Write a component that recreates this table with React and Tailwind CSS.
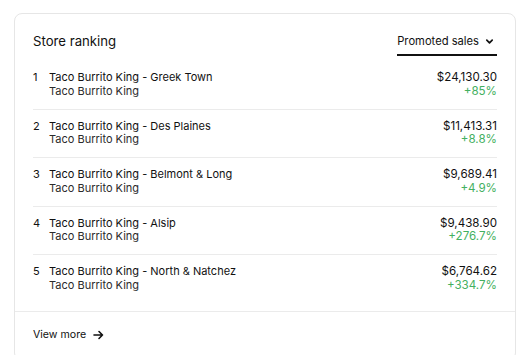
import React from "react";

const rows = [
  { n: 1, name: "Taco Burrito King - Greek Town", amount: "$24,130.30", pct: "+85%" },
  { n: 2, name: "Taco Burrito King - Des Plaines", amount: "$11,413.31", pct: "+8.8%" },
  { n: 3, name: "Taco Burrito King - Belmont & Long", amount: "$9,689.41", pct: "+4.9%" },
  { n: 4, name: "Taco Burrito King - Alsip", amount: "$9,438.90", pct: "+276.7%" },
  { n: 5, name: "Taco Burrito King - North & Natchez", amount: "$6,764.62", pct: "+334.7%" },
];

export default function App() {
  return (
    <div
      className="w-[525px] h-[355px] overflow-hidden bg-white pt-[13px] pl-[14px]"
      style={{ fontFamily: "Inter, 'Liberation Sans', sans-serif" }}
    >
      <div className="w-[502px] rounded-lg border border-[#e6e6e6] bg-white">
        <div className="flex items-start justify-between px-[18px] pt-[17px]">
          <div className="text-[13.2px] leading-[20px] text-[#111111]">Store ranking</div>
          <button className="mt-[2px] flex items-center gap-[6px] border-b-2 border-[#111111] pb-[4px] text-[11.2px] leading-[17px] text-[#111111]">
            <span>Promoted sales</span>
            <svg width="9" height="9" viewBox="0 0 10 10" className="mr-[3px]">
              <path d="M2 3.5 L5 6.5 L8 3.5" fill="none" stroke="#111111" strokeWidth="1.9" strokeLinecap="round" strokeLinejoin="round" />
            </svg>
          </button>
        </div>
        <div className="px-[18px] pt-[5px] pb-[8px]">
          {rows.map((r, i) => (
            <div
              key={r.n}
              className={
                "flex items-start justify-between py-[10px] leading-[13.75px] " +
                (i < rows.length - 1 ? "border-b border-[#ebebeb]" : "")
              }
            >
              <div className="flex text-[11px]">
                <div className="w-4 text-[#111111]">{r.n}</div>
                <div>
                  <div className="text-[#111111]">{r.name}</div>
                  <div className="text-[#2b2b2b]">Taco Burrito King</div>
                </div>
              </div>
              <div className="text-right text-[11.6px]">
                <div className="text-[#111111]">{r.amount}</div>
                <div className="text-[#43b060]">{r.pct}</div>
              </div>
            </div>
          ))}
        </div>
        <div className="border-t border-[#ebebeb] px-[18px] pt-[14px] pb-[16px]">
          <div className="flex items-center gap-[7px] text-[10.6px] leading-[18px] text-[#111111]">
            <span>View more</span>
            <svg width="11" height="10" viewBox="0 0 11 10">
              <path d="M1 5 H9.5 M6 1.5 L9.5 5 L6 8.5" fill="none" stroke="#111111" strokeWidth="1.6" strokeLinecap="round" strokeLinejoin="round" />
            </svg>
          </div>
        </div>
      </div>
    </div>
  );
}
